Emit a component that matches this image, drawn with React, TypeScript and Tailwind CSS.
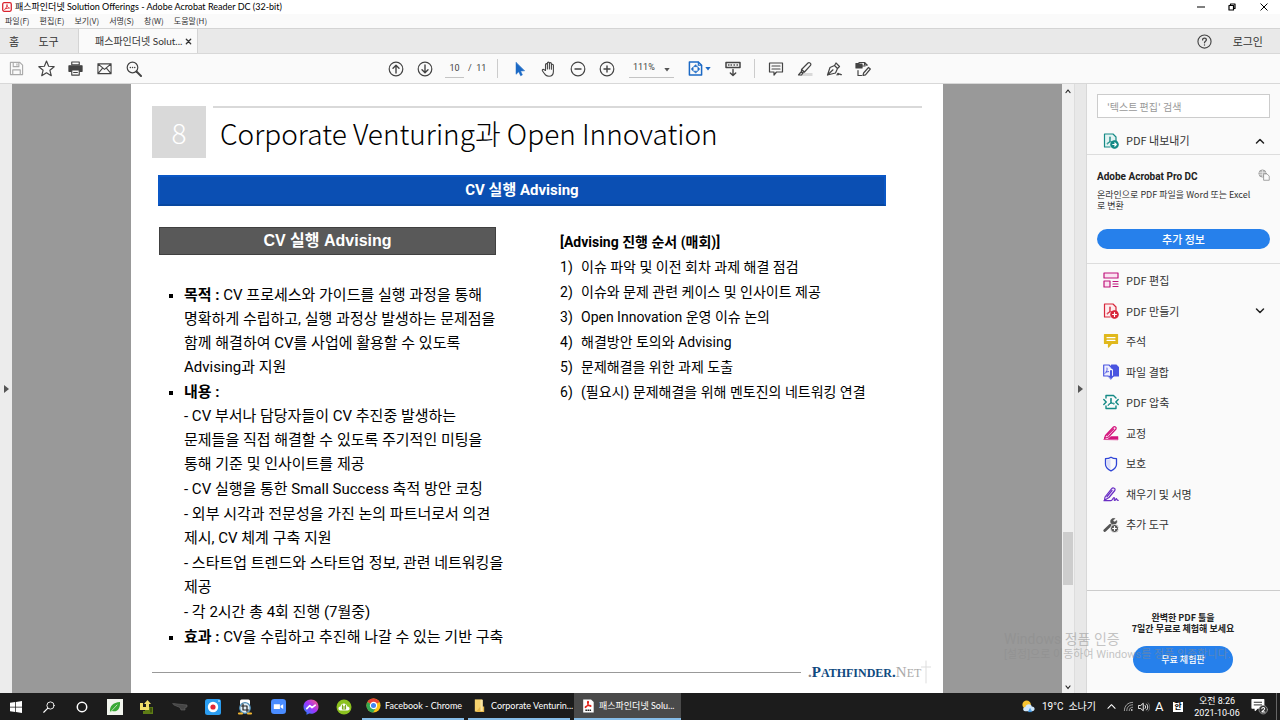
import type { ReactNode } from 'react';

const menus = ['파일(F)', '편집(E)', '보기(V)', '서명(S)', '창(W)', '도움말(H)'];

const steps = [
  '이슈 파악 및 이전 회차 과제 해결 점검',
  '이슈와 문제 관련 케이스 및 인사이트 제공',
  'Open Innovation 운영 이슈 논의',
  '해결방안 토의와 Advising',
  '문제해결을 위한 과제 도출',
  '(필요시) 문제해결을 위해 멘토진의 네트워킹 연결',
];

const details = [
  ['- CV 부서나 담당자들이 CV 추진중 발생하는', '문제들을 직접 해결할 수 있도록 주기적인 미팅을', '통해 기준 및 인사이트를 제공'],
  ['- CV 실행을 통한 Small Success 축적 방안 코칭'],
  ['- 외부 시각과 전문성을 가진 논의 파트너로서 의견', '제시, CV 체계 구축 지원'],
  ['- 스타트업 트렌드와 스타트업 정보, 관련 네트워킹을', '제공'],
  ['- 각 2시간 총 4회 진행 (7월중)'],
];

function Svg({ children, className = 'size-4', box = '0 0 16 16' }: { children: ReactNode; className?: string; box?: string }) {
  return (
    <svg className={`shrink-0 ${className}`} viewBox={box} fill="none" stroke="currentColor" strokeWidth="1.2" strokeLinejoin="round" strokeLinecap="round" aria-hidden="true">
      {children}
    </svg>
  );
}

function ToolButton({ label, children, className = 'w-[29px]' }: { label: string; children: ReactNode; className?: string }) {
  return (
    <button aria-label={label} className={`flex h-full items-center justify-center ${className}`}>
      {children}
    </button>
  );
}

// The three-lobed Acrobat mark used inside the document icons
const acrobat = 'M7 4.2c.9 0 .5 2-.2 3.6C6 9.500 4.700 11.500 4 11.200c-.8-.5 1-1.800 3-2.200 1.700-.4 3.500-.1 3.400.6-.2.800-2.500-.4-3.300-1.900C6.500 6.500 6.200 4.200 7 4.200z';

const tools: { name: string; icon: ReactNode; expandable?: boolean }[] = [
  {
    name: 'PDF 편집',
    icon: (
      <Svg className="size-4 text-[#c0147c]">
        <rect x="1" y="1" width="14" height="5" fill="#fbe3f1" />
        <rect x="1" y="9" width="6" height="6" fill="#fbe3f1" />
        <path d="M10 9.500h5M10 12h5M10 14.500h5" />
      </Svg>
    ),
  },
  {
    name: 'PDF 만들기',
    expandable: true,
    icon: (
      <Svg className="size-4 text-[#d7263a]">
        <path d="M7 14H1.500V1H10l3 3v4" fill="#fdecee" />
        <path d={acrobat} strokeWidth="0.900" />
        <circle cx="11.500" cy="11.500" r="3.700" fill="#d7263a" />
        <path d="M11.500 9.600v3.800M9.600 11.500h3.800" stroke="#fff" />
      </Svg>
    ),
  },
  {
    name: '주석',
    icon: (
      <Svg className="size-4 text-[#e0b81c]">
        <path d="M1.500 1.500h13v9H8.500L5.500 14v-3.500h-4z" fill="currentColor" />
        <path d="M4 4.700h8M4 7.300h8" stroke="#fff" />
      </Svg>
    ),
  },
  {
    name: '파일 결합',
    icon: (
      <Svg className="size-4 text-[#4a55e0]">
        <path d="M8.500 1H13l2.500 2.500V12H9z" fill="currentColor" />
        <path d="M5 12H.7V1H6l2.500 2.500V8" fill="#eef" />
        <path d="M2 9.500c1.800-1.500 2.500-4 2-5.500M3 8l3.500-.5" strokeWidth="0.900" />
        <path d="M8 6.500v5" stroke="#fff" strokeWidth="4" />
        <path d="M8 7v6" strokeWidth="2.200" />
        <path d="M5.200 12h5.600L8 15.300z" fill="currentColor" strokeWidth="0.500" />
      </Svg>
    ),
  },
  {
    name: 'PDF 압축',
    icon: (
      <Svg className="size-4 text-[#158a86]">
        <path d="M3 4V1.500h7.500L13 4M3 12v2.500h10V12" strokeWidth="1.400" />
        <path d={acrobat} strokeWidth="1" transform="translate(1 .3)" />
        <path d="M.8 5.500L3.200 8 .8 10.500M15.200 5.500L12.800 8l2.400 2.500" strokeWidth="1.400" />
      </Svg>
    ),
  },
  {
    name: '교정',
    icon: (
      <Svg className="size-4 text-[#d3147c]">
        <path d="M2.500 10.500L10.500 2c1-1 3.500.3 2.500 2L5.500 12l-4 1.500z" fill="#fbe3f1" />
        <path d="M4 10.500l6.500-6.500" />
        <path d="M1 14.500h3l4-3h7v3z" fill="currentColor" strokeWidth="0.500" />
      </Svg>
    ),
  },
  {
    name: '보호',
    icon: (
      <Svg className="size-4 text-[#2f45d6]">
        <path d="M8 1.200c1.800 1.200 3.600 1.500 5.500 1.500v5.600c0 3-2.200 5-5.500 6.600-3.300-1.600-5.500-3.600-5.500-6.600V2.700c1.900 0 3.700-.3 5.500-1.500z" strokeWidth="1.300" />
        <path d="M7.500 3v10C5 11.500 4 10.300 4 8.500V4c1.300 0 2.500-.4 3.500-1z" fill="#d9dcfa" stroke="none" />
      </Svg>
    ),
  },
  {
    name: '채우기 및 서명',
    icon: (
      <Svg className="size-4 text-[#6a2fc4]">
        <path d="M2 11L8.500 2.800c1.500-1.700 4.500-.5 3.300 1.700L6 11.500l-4.500 2.700z" fill="#eee5fb" />
        <path d="M4 10.500l5-6M1 14.700h7c1.500 0 1.800-3.200 3-3.200 1 0-.5 3 .7 3s.8-1.800 1.600-1.800c.7 0 .2 1.700 1.900 1.700" />
      </Svg>
    ),
  },
  {
    name: '추가 도구',
    icon: (
      <Svg className="size-4 text-[#555]">
        <path d="M1.800 13.500l5.500-5.300" strokeWidth="2.800" />
        <path d="M11.800 1.500c-2.500-.8-4.800 1.300-4.200 3.700.5 2.400 3.600 3.200 5.300 1.500 1-.9 1.200-2.200.9-3.200L11.500 5 10 3.500z" fill="currentColor" strokeWidth="0.500" />
        <circle cx="11.500" cy="11.500" r="4" fill="#555" stroke="#fafafa" strokeWidth="0.800" />
        <path d="M11.500 9.700v3.600M9.700 11.500h3.600" stroke="#fff" />
      </Svg>
    ),
  },
];

function Chevron({ up = false }: { up?: boolean }) {
  return (
    <Svg className="size-[10px] text-[#222]" box="0 0 10 10">
      <path d={up ? 'M1.500 7L5 3.500 8.500 7' : 'M1.500 3L5 6.500 8.500 3'} strokeWidth="1.500" />
    </Svg>
  );
}

function TitleBar() {
  return (
    <header className="shrink-0 text-black">
      <div className="flex h-[14px] items-center bg-white">
        <Svg className="ml-[2px] size-[10px] text-[#d9232e]" box="0 0 14 14">
          <rect x="1" y="1" width="12" height="12" rx="2" fill="#fff" strokeWidth="1.800" />
          <path d="M4 10c2-1.500 3.500-4.500 3-6.500-.8 2 1.500 4.500 3.500 5-2 0-4.500.3-6.500 1.500z" />
        </Svg>
        <h1 className="ml-[3px] font-['Lato','Noto_Sans_CJK_KR',sans-serif] text-[9px] leading-[14px]">패스파인더넷 Solution Offerings - Adobe Acrobat Reader DC (32-bit)</h1>
        <div className="ml-auto flex items-center">
          <button aria-label="Minimize" className="w-[30px]">
            <Svg className="mx-auto size-2" box="0 0 8 8"><path d="M.5 4h7" /></Svg>
          </button>
          <button aria-label="Restore" className="w-[31px]">
            <Svg className="mx-auto size-2" box="0 0 8 8"><path d="M1 2.500h4.500V7H1zM2.500 2.500V1H7v4.500H5.500" /></Svg>
          </button>
          <button aria-label="Close" className="w-[33px]">
            <Svg className="mx-auto size-2" box="0 0 8 8"><path d="M.8.8l6.400 6.400M7.200.8L.8 7.200" strokeWidth="1" /></Svg>
          </button>
        </div>
      </div>
      <nav className="flex h-[14px] items-center gap-[10px] bg-[#fafafa] pl-[5px] font-['Noto_Sans_CJK_KR',sans-serif] text-[8px] leading-[14px] text-[#333]">
        {menus.map((m) => (
          <button key={m}>{m}</button>
        ))}
      </nav>
    </header>
  );
}

function TabBar() {
  return (
    <div className="flex h-[25px] shrink-0 border-t border-[#d4d4d4] bg-[#e9e9e9] font-['Noto_Sans_CJK_KR',sans-serif] text-[11px] text-[#333]">
      <button className="w-[28px]">홈</button>
      <button className="w-[41px]">도구</button>
      <div className="ml-[9px] flex w-[120px] items-center border-x border-[#d4d4d4] bg-[#fafafa] pl-4 font-['Lato','Noto_Sans_CJK_KR',sans-serif] text-[10px]">
        <button className="w-[88px] text-left whitespace-nowrap">패스파인더넷 Solut...</button>
        <button aria-label="Close tab" className="ml-[2px]">
          <Svg className="size-[7px]" box="0 0 8 8"><path d="M1.500 1.500l5 5M6.500 1.500l-5 5" strokeWidth="1.500" /></Svg>
        </button>
      </div>
      <button aria-label="Help" className="ml-auto">
        <Svg className="size-[15px] text-[#444]">
          <circle cx="8" cy="8" r="7" />
          <path d="M6 6.300c0-2.600 4-2.300 4-.1C10 7.700 8 7.700 8 9.300M8 11.500v.2" strokeWidth="1.400" />
        </Svg>
      </button>
      <button className="mr-[17px] ml-[21px]">로그인</button>
    </div>
  );
}

function Toolbar() {
  return (
    <div className="flex h-[31px] shrink-0 items-center border-y border-[#d8d8d8] bg-[#fafafa] pl-[2px] text-[#444]">
      <ToolButton label="Save">
        <Svg className="size-[15px] text-[#aaa]"><path d="M1.500 1.500h10l3 3v10h-13zM4.500 1.500v4.500h6V1.500M4 14.500V9.500h8v5M8.500 3v1.500" /></Svg>
      </ToolButton>
      <ToolButton label="Favorite" className="w-[30px]">
        <Svg className="size-[17px]"><path d="M8 1l2 4.900 5.200.4-4 3.400 1.300 5.100L8 12l-4.500 2.800 1.300-5.100-4-3.400L6 5.900z" strokeWidth="1.100" /></Svg>
      </ToolButton>
      <ToolButton label="Print">
        <Svg className="size-[15px]">
          <path d="M4 1h8v3H4z" />
          <path d="M1 5h14v6h-2.500V9h-9v2H1z" fill="currentColor" />
          <path d="M4 9.500h8V15H4zM6 12.300h4" />
        </Svg>
      </ToolButton>
      <ToolButton label="Mail">
        <Svg className="size-[15px]"><path d="M1 3h14v10.500H1zM1 3l7 6 7-6M1 13.500l5-5.800M15 13.500l-5-5.800" /></Svg>
      </ToolButton>
      <ToolButton label="Find" className="w-[30px]">
        <Svg>
          <circle cx="6.500" cy="6.500" r="5.300" />
          <path d="M10.500 10.500l4.500 4.500" strokeWidth="2" />
          <path d="M4.300 6.500h.1M6.500 6.500h.1M8.700 6.500h.1" strokeWidth="1.400" />
        </Svg>
      </ToolButton>

      <div className="ml-[232px] flex h-full items-center">
        <ToolButton label="Previous page">
          <Svg><circle cx="8" cy="8" r="6.800" /><path d="M8 12V4.500M5 7.300l3-3 3 3" strokeWidth="1.400" /></Svg>
        </ToolButton>
        <ToolButton label="Next page">
          <Svg><circle cx="8" cy="8" r="6.800" /><path d="M8 4v7.500M5 8.700l3 3 3-3" strokeWidth="1.400" /></Svg>
        </ToolButton>
        <input aria-label="Page" defaultValue="10" className="ml-[6px] h-[18px] w-[19px] border-b border-[#c4c4c4] bg-transparent text-center text-[9px] outline-none" />
        <span className="ml-[4px] w-[18px] text-[9px] whitespace-pre">/  11</span>
        <div className="ml-[11px] h-[19px] w-px bg-[#ccc]" />
        <ToolButton label="Select" className="ml-[7px] w-[29px]">
          <Svg className="size-4 text-[#1b69c5]"><path d="M4 1.500v11.800l2.800-2.500 1.800 4 1.800-.9-1.800-3.800 3.800-.3z" fill="currentColor" strokeWidth="0.500" /></Svg>
        </ToolButton>
        <ToolButton label="Pan">
          <Svg><path d="M4.500 9.500V3.700c0-1.400 1.900-1.400 1.900 0V8 2.200c0-1.400 2-1.400 2 0V8 2.700c0-1.400 2-1.400 2 0v5.600-4c0-1.400 2-1.300 2 0v6.200c0 3-1.700 4.700-4.400 4.700-3 0-4-1.500-6.500-5.200-.8-1.300.7-2.200 1.700-1.200z" strokeWidth="1.100" /></Svg>
        </ToolButton>
        <ToolButton label="Zoom out">
          <Svg><circle cx="8" cy="8" r="6.800" /><path d="M5 8h6" strokeWidth="1.400" /></Svg>
        </ToolButton>
        <ToolButton label="Zoom in">
          <Svg><circle cx="8" cy="8" r="6.800" /><path d="M5 8h6M8 5v6" strokeWidth="1.400" /></Svg>
        </ToolButton>
        <div className="relative ml-[8px]">
          <select aria-label="Zoom" className="block h-[18px] w-[45px] appearance-none border-b border-[#c4c4c4] pl-1 text-[9px]">
            <option>111%</option>
          </select>
          <svg className="pointer-events-none absolute top-[7px] right-1 size-[6px]" viewBox="0 0 6 6" aria-hidden="true"><path d="M.3 1h5.400L3 4.500z" fill="#555" /></svg>
        </div>
        <ToolButton label="Fit page" className="ml-[11px] w-[29px] gap-[2px]">
          <Svg className="size-[15px] text-[#1b69c5]">
            <path d="M1.500 1h9.500l3.500 3.500V15h-13z" strokeWidth="1.600" />
            <path d="M11 1v3.500h3.500" />
            <path d="M8 4L6 6h4zM8 12.800l-2-2h4zM3.500 8.400l2-2v4zM12.500 8.400l-2-2v4z" fill="currentColor" strokeWidth="0.600" />
          </Svg>
          <svg className="size-[6px]" viewBox="0 0 6 6" aria-hidden="true"><path d="M.3 1h5.400L3 4.500z" fill="#1b69c5" /></svg>
        </ToolButton>
        <ToolButton label="Scrolling" className="ml-[4px] w-[29px]">
          <Svg><path d="M1 1.500h14v5H1z" strokeWidth="1.500" /><path d="M3.500 4h.5M6 4h.5M9 4h.5M12 4h.5M8 8.500V14M5.300 12L8 14.500 10.700 12" strokeWidth="1.400" /></Svg>
        </ToolButton>
        <div className="ml-[7px] h-[19px] w-px bg-[#ccc]" />
        <ToolButton label="Comment" className="ml-[6px] w-[29px]">
          <Svg><path d="M1.500 2h13v9H8.500L6 14v-3H1.500zM4 5h8M4 8h8" /></Svg>
        </ToolButton>
        <ToolButton label="Highlight">
          <Svg>
            <path d="M6 12h9.500v3H2z" fill="#d9d9d9" stroke="none" />
            <path d="M4.500 8.500L11 2c1.200-1.200 3.800.8 2.500 2.300L7.500 11l-3 .7zM4.500 8.500l3 2.500M4 11l-2.500 3h3l1.500-2" />
          </Svg>
        </ToolButton>
        <ToolButton label="Sign">
          <Svg><path d="M1.500 14L4 6.500l4.500-2 3 3L9.500 12zM1.500 14L7 8.800M8.500 4.500L10 2l3.500 3.500-2 2M11 14c1-2 1.500-2 1.500-.7 0 1.200 1-.8 1.500-.3s.5 1 1.500.7" /></Svg>
        </ToolButton>
        <ToolButton label="Edit tools" className="w-[30px]">
          <Svg>
            <path d="M1 2.500h3V1.500h5.500L12 4M10 5H6.500" />
            <path d="M1 3h6v4H1z" fill="currentColor" />
            <path d="M9.500 1.500V4H12M3 9.500v5h3.500M8 14.500l.6-2.500L13.500 6.500l1.800 1.500-4.800 5.800z" />
          </Svg>
        </ToolButton>
      </div>
    </div>
  );
}

function Slide() {
  return (
    <article className="flex w-[812px] flex-col bg-white px-[21px] pt-[22px] text-black">
      <div className="flex gap-[7px] font-['Noto_Sans_CJK_KR',sans-serif] font-light">
        <div className="flex h-[52px] w-[54px] items-center justify-center bg-[#d9d9d9] text-[28px] text-white">8</div>
        <div className="flex-1 border-t-2 border-[#d9d9d9]">
          <h2 className="pl-[7px] text-[28px] leading-[50px]">Corporate Venturing과 Open Innovation</h2>
        </div>
      </div>
      <h3 className="mt-[17px] mr-[36px] ml-[6px] border-2 border-[#0a57c6] border-b-[#0847a0] bg-[#0b4fb3] text-center text-[15px] leading-[27px] font-bold text-white">
        CV 실행 Advising
      </h3>
      <div className="mt-[21px] flex">
        <section className="ml-[7px] w-[373px]">
          <h4 className="mr-[36px] border border-[#404040] bg-[#595959] text-center font-['Liberation_Sans','Noto_Sans_CJK_KR',sans-serif] text-[16px] leading-[26px] font-bold text-white">
            CV 실행 Advising
          </h4>
          <ul className="mt-[28px] ml-[10px] flex flex-col gap-px text-[15px] leading-[24px] whitespace-nowrap">
            <Bullet>
              <b>목적 : </b>CV 프로세스와 가이드를 실행 과정을 통해
              <br />명확하게 수립하고, 실행 과정상 발생하는 문제점을
              <br />함께 해결하여 CV를 사업에 활용할 수 있도록
              <br />Advising과 지원
            </Bullet>
            <Bullet>
              <b>내용 :</b>
              <div className="flex flex-col gap-px">
                {details.map((lines) => (
                  <div key={lines[0]}>
                    {lines.map((line) => (
                      <p key={line}>{line}</p>
                    ))}
                  </div>
                ))}
              </div>
            </Bullet>
            <Bullet>
              <b>효과 : </b>CV을 수립하고 추진해 나갈 수 있는 기반 구축
            </Bullet>
          </ul>
        </section>
        <section className="ml-[28px] pt-[3px] text-[14px] leading-[25px] whitespace-nowrap">
          <h4 className="font-bold">[Advising 진행 순서 (매회)]</h4>
          <ol>
            {steps.map((step, i) => (
              <li key={step} className="flex">
                <span className="w-[21px]">{i + 1})</span>
                {step}
              </li>
            ))}
          </ol>
        </section>
      </div>
      <footer className="mt-auto mb-[9px] flex h-[24px] items-center">
        <div className="h-px w-[649px] shrink-0 bg-[#999]" />
        <div className="ml-[7px] font-['Liberation_Serif',serif] text-[15px] leading-[24px] font-bold text-[#0f4a80]">
          <span className="text-[#888]">.</span>P<span className="text-[12px]">ATHFINDER</span>.
          <span className="font-normal text-[#aaa]">N<span className="text-[12px]">ET</span></span>
        </div>
        <Svg className="h-[24px] w-[10px] text-[#ddd]" box="0 0 10 24"><path d="M5 1v22M0 7h10" strokeWidth="1" /></Svg>
      </footer>
    </article>
  );
}

function Bullet({ children }: { children: ReactNode }) {
  return (
    <li className="flex gap-[11px]">
      <span className="mt-[11px] size-1 shrink-0 bg-black" />
      <div>{children}</div>
    </li>
  );
}

function Scrollbar() {
  return (
    <div className="flex w-[12px] shrink-0 flex-col items-center bg-[#f0f0f0]">
      <button aria-label="Scroll up" className="flex h-[13px] items-center"><Svg className="size-[6px] text-[#222]" box="0 0 6 6"><path d="M1 4.500l2-2.500 2 2.500" strokeWidth="1.200" /></Svg></button>
      <div className="grow-[435]" />
      <div className="w-[10px] grow-[53] bg-[#cdcdcd]" />
      <div className="grow-[95]" />
      <button aria-label="Scroll down" className="flex h-[13px] items-center"><Svg className="size-[6px] text-[#222]" box="0 0 6 6"><path d="M1 2l2 2.500L5 2" strokeWidth="1.200" /></Svg></button>
    </div>
  );
}

function ToolsPanel() {
  return (
    <aside className="flex w-[194px] shrink-0 flex-col border-l border-[#d8d8d8] bg-[#fafafa] font-['Noto_Sans_CJK_KR',sans-serif] text-[#333]">
      <div className="pt-[10px] pr-[10px] pl-[10px]">
        <input aria-label="검색" placeholder="'텍스트 편집' 검색" className="block h-[24px] w-full border border-[#ccc] bg-white px-[9px] text-[10px] placeholder:text-[#999] outline-none" />
      </div>
      <button className="mt-[9px] flex h-[28px] shrink-0 items-center border-b border-[#ddd] pr-[15px] pl-[16px] text-[11px]">
        <Svg className="size-4 text-[#158a86]">
          <path d="M7 14H1.500V1H10l3 3v4" fill="#e2f3f2" />
          <path d={acrobat} strokeWidth="0.900" />
          <circle cx="11.500" cy="11.500" r="3.700" fill="#158a86" />
          <path d="M9.800 11.500h3.400M11.800 10l1.500 1.500-1.500 1.500" stroke="#fff" />
        </Svg>
        <span className="mr-auto ml-[7px]">PDF 내보내기</span>
        <Chevron up />
      </button>
      <section className="border-b border-[#ddd] pt-[14px] pr-[10px] pb-[14px] pl-[10px]">
        <div className="flex justify-between">
          <h2 className="font-['Roboto',sans-serif] text-[10px] leading-[15px] font-bold text-[#222]">Adobe Acrobat Pro DC</h2>
          <Svg className="size-[12px] text-[#999]">
            <circle cx="6" cy="6" r="4.800" fill="#bbb" />
            <path d="M2 4.500h8M2 7.500h8M6 1.500v9" stroke="#eee" strokeWidth="0.800" />
            <path d="M8 6.500h4l3 3V15H8z" fill="#fafafa" />
          </Svg>
        </div>
        <p className="mt-[5px] text-[9px] leading-[11px]">온라인으로 PDF 파일을 Word 또는 Excel<br />로 변환</p>
        <button className="mt-[18px] block h-[20px] w-full rounded-full bg-[#2680eb] text-[11px] font-medium text-white">추가 정보</button>
      </section>
      <nav className="mt-px grid h-[275px] shrink-0 auto-rows-fr text-[11px]">
        {tools.map((t) => (
          <button key={t.name} className="flex items-center pr-[15px] pl-[16px]">
            {t.icon}
            <span className="mr-auto ml-[7px]">{t.name}</span>
            {t.expandable && <Chevron />}
          </button>
        ))}
      </nav>
      <section className="mt-auto flex h-[103px] shrink-0 flex-col items-center border-t border-[#ccc] pt-[21px] pr-[1px] text-center">
        <p className="text-[9px] leading-[11px] font-bold text-[#222]">완벽한 PDF 툴을<br />7일간 무료로 체험해 보세요</p>
        <button className="mt-[12px] h-[27px] w-[100px] rounded-full bg-[#2680eb] text-[9px] font-medium text-white">무료 체험판</button>
      </section>
    </aside>
  );
}

const pinned: { name: string; icon: ReactNode }[] = [
  { name: 'Start', icon: <Svg className="size-[12px]"><path d="M0 2.300l7-1v6.200H0zM8 1.200L16 0v7.500H8zM0 8.500h7v6.200l-7-1zM8 8.500h8V16l-8-1.200z" fill="#fff" stroke="none" /></Svg> },
  { name: 'Search', icon: <Svg className="size-[12px]"><circle cx="10" cy="6" r="4.800" /><path d="M6.500 9.500L1 15" strokeWidth="1.500" /></Svg> },
  { name: 'Cortana', icon: <Svg className="size-[12px]"><circle cx="8" cy="8" r="6.300" strokeWidth="2" /></Svg> },
  { name: 'Leaf', icon: <Svg><rect x="0" y="0" width="16" height="16" fill="#f2f5ee" stroke="none" /><path d="M3 13c-.5-6 3-9.500 10-10 .5 7-3 10.500-8 9z" fill="#3aa935" stroke="none" /><path d="M2.500 14L10 6" stroke="#d5efd0" strokeWidth="0.800" /></Svg> },
  { name: 'Transfer', icon: <Svg><path d="M6 8h8v7H4v-3h2z" fill="#5e7d16" stroke="none" /><path d="M1 4h3v4h3V5H5l3.500-4L12 5h-2v6H1z" fill="#f2de6a" stroke="none" /><path d="M12 9v4" stroke="#2c3a08" /></Svg> },
  { name: 'Utility', icon: <Svg><path d="M1 4.500l9 1 5 .5v2l-2 .5v2.500H9L8 8.500 2 6z" fill="#444" stroke="#666" strokeWidth="0.600" /></Svg> },
  { name: 'Recorder', icon: <Svg><rect x="0" y="0" width="16" height="16" rx="2.500" fill="#2b9df0" stroke="none" /><circle cx="8" cy="8" r="5.200" fill="#fff" stroke="none" /><circle cx="8" cy="8" r="2.600" fill="#e32636" stroke="none" /><circle cx="14" cy="2" r=".8" fill="#fff" stroke="none" /></Svg> },
  { name: 'Capture', icon: <Svg><rect x="3" y=".5" width="10" height="7" rx="1.500" fill="#fff" stroke="none" /><circle cx="8" cy="9" r="5.300" fill="#e3eff6" stroke="#4d8cb5" /><path d="M6 5v6h5.500M4.500 7H10v5.500" stroke="#222" /><path d="M2 14.500h3M14 14.500h-3" stroke="#f2b632" strokeWidth="2.200" /></Svg> },
  { name: 'Zoom', icon: <Svg className="size-[15px]"><rect x="0" y="0" width="16" height="16" rx="3.500" fill="#4a8cff" stroke="none" /><path d="M3 5.500h6.500v5.200H3zM10.200 7.300L13 5.500v5.200l-2.800-1.800z" fill="#fff" stroke="none" /></Svg> },
  { name: 'Messenger', icon: <Svg><defs><linearGradient id="messenger" x1="0" y1="1" x2="1" y2="0"><stop offset="0" stopColor="#168dff" /><stop offset=".5" stopColor="#a033ff" /><stop offset="1" stopColor="#ff5f74" /></linearGradient></defs><path d="M8 .5c4.300 0 7.500 3 7.500 7.200 0 4.500-4 7.800-9.300 6.900L3.500 15.700v-2.500C1.500 11.900.5 10 .5 7.700.5 3.500 3.700.5 8 .5z" fill="url(#messenger)" stroke="none" /><path d="M3.800 9.700l3-3 2.200 2 3.200-2.500" stroke="#fff" strokeWidth="1.700" /></Svg> },
  { name: 'Cloud', icon: <Svg><circle cx="8" cy="8" r="7.500" fill="#8cc21f" stroke="none" /><path d="M4.500 11.500c-3-.5-2.500-4 0-4C5 3.500 10.500 3.200 11.300 7.500c3 .2 3 4 0 4z" fill="#fff" stroke="none" /><path d="M6.500 6v4h3V6M6.500 8h3" stroke="#7aa81c" /></Svg> },
];

function TaskButton({ icon, title, active = false }: { icon: ReactNode; title: string; active?: boolean }) {
  return (
    <button className={`flex h-full items-center gap-[4px] border-b-2 border-[#86bde8] font-['Lato','Noto_Sans_CJK_KR',sans-serif] text-[9px] whitespace-nowrap ${active ? 'w-[107px] bg-[#4a4a4a] pl-[7px]' : 'w-[102px] pl-[4px]'}`}>
      {icon}
      {title}
    </button>
  );
}

function Taskbar() {
  return (
    <footer className="flex h-[27px] shrink-0 items-center bg-[#1c1c1c] text-white">
      <div className="flex w-[360px] justify-around">
        {pinned.map((p) => (
          <button key={p.name} aria-label={p.name} className="flex w-[32px] items-center justify-center">{p.icon}</button>
        ))}
      </div>
      <div className="ml-[2px] flex h-full gap-[4px]">
        <TaskButton
          title="Facebook - Chrome"
          icon={
            <Svg className="size-[15px]">
              <circle cx="8" cy="8" r="7.500" fill="#fbc116" stroke="none" />
              <path d="M8 8L1.500 4.200A7.500 7.500 0 0 1 14.500 4.300z" fill="#ea4335" stroke="none" />
              <path d="M8 8L1.500 4.200A7.500 7.500 0 0 0 7.500 15.500L11 9.800z" fill="#34a853" stroke="none" />
              <circle cx="8" cy="8" r="3.300" fill="#4285f4" stroke="#fff" />
            </Svg>
          }
        />
        <TaskButton
          title="Corporate Venturin..."
          icon={<Svg className="size-[15px]"><path d="M3 1.500h8v13H3z" fill="#f6d36f" stroke="none" /><path d="M9 9h4v6H4z" fill="#e8b94a" stroke="none" /><path d="M9 2h2.500v12H9z" fill="#fbe6a3" stroke="none" /></Svg>}
        />
        <TaskButton
          active
          title="패스파인더넷 Solu..."
          icon={
            <Svg className="size-[14px]">
              <path d="M2.500.5h9l3 3v12h-12z" fill="#fff" stroke="none" />
              <path d={acrobat} stroke="#e2231a" strokeWidth="1.400" transform="translate(1 -1.500)" />
              <path d="M5 12.800h6.500" stroke="#222" strokeWidth="1.800" strokeDasharray="1.800 .6" strokeLinecap="butt" />
            </Svg>
          }
        />
      </div>

      <div className="ml-auto flex h-full items-center">
        <button className="flex items-center gap-[6px] text-[10px]">
          <Svg className="size-[15px]">
            <circle cx="6" cy="6" r="4.500" fill="#f7c331" stroke="none" />
            <path d="M4.500 13c-3-.3-2.800-4.500.2-4.500C5.500 4.500 11 4.700 11.500 8c4 0 4 5 .3 5z" fill="#cfe6fa" stroke="none" />
            <path d="M9.500 10.500l-1.500 3h3z" fill="#3f9ae6" stroke="#3f9ae6" strokeWidth="0.800" />
          </Svg>
          19°C&nbsp; 소나기
        </button>
        <Svg className="ml-[11px] size-[9px]" box="0 0 10 10"><path d="M1 7l4-4 4 4" /></Svg>
        <Svg className="ml-[7px] size-[11px]"><path d="M2 14C2 7 7 2 14 2M5.500 14c0-5 3.500-8.500 8.500-8.500M9 14c0-3 2-5 5-5" stroke="#bbb" /><path d="M12.500 13h.5" strokeWidth="2" /></Svg>
        <Svg className="ml-[4px] size-[12px]"><path d="M1 6h2.500L7 3v10L3.500 10H1zM9.500 6c1 1 1 3 0 4M11.500 4c2.200 2 2.200 6 0 8" /><path d="M13.500 2.500c3 3 3 8 0 11" stroke="#777" /></Svg>
        <span className="ml-[5px] w-[9px] text-[13px]">A</span>
        <span className="ml-[9px] flex size-[10px] items-center justify-center bg-white text-[8px] leading-[10px] font-bold text-black">한</span>
        <div className="ml-[11px] w-[46px] text-center text-[9px] leading-[12px] whitespace-nowrap">
          <p>오전 8:26</p>
          <p>2021-10-06</p>
        </div>
        <button aria-label="Notifications" className="ml-[11px]">
          <Svg className="size-[17px]">
            <path d="M1 1.500h11v8H6L4 11.500v-2H1z" fill="#fff" />
            <path d="M3 4h7M3 6.500h7" stroke="#222" strokeWidth="0.900" />
            <circle cx="11.500" cy="11" r="4" fill="#333" stroke="#999" strokeWidth="0.800" />
            <path d="M10.200 10c.2-1.500 2.600-1.300 2.600.1 0 1-1.500 1.800-2.600 3h2.800" strokeWidth="1" />
          </Svg>
        </button>
        <div className="ml-[8px] h-full w-px bg-[#666]" />
        <div className="w-[3px]" />
      </div>
    </footer>
  );
}

export default function App() {
  return (
    <div className="relative flex h-screen flex-col overflow-hidden bg-[#fafafa] font-['Roboto','Noto_Sans_CJK_KR',sans-serif]">
      <TitleBar />
      <TabBar />
      <Toolbar />
      <main className="flex min-h-0 flex-1">
        <button aria-label="Show navigation" className="flex w-[12px] shrink-0 items-center justify-center bg-[#ececec]">
          <svg className="h-[8px] w-[5px]" viewBox="0 0 5 8" aria-hidden="true"><path d="M0 0l5 4-5 4z" fill="#555" /></svg>
        </button>
        <div className="flex flex-1 justify-center overflow-hidden bg-[#999]">
          <Slide />
        </div>
        <Scrollbar />
        <button aria-label="Hide tools" className="flex w-[12px] shrink-0 items-center justify-center border-l border-[#ddd] bg-[#e8e8e8]">
          <svg className="h-[8px] w-[5px]" viewBox="0 0 5 8" aria-hidden="true"><path d="M0 0l5 4-5 4z" fill="#555" /></svg>
        </button>
        <ToolsPanel />
      </main>
      <Taskbar />
      <div className="pointer-events-none absolute right-[52px] bottom-[58px] w-[224px] whitespace-nowrap text-[#8c8c8c]/50">
        <p className="text-[14px] leading-[16px]">Windows 정품 인증</p>
        <p className="text-[11px] leading-[15px]">[설정]으로 이동하여 Windows를 정품 인증합니다.</p>
      </div>
    </div>
  );
}
